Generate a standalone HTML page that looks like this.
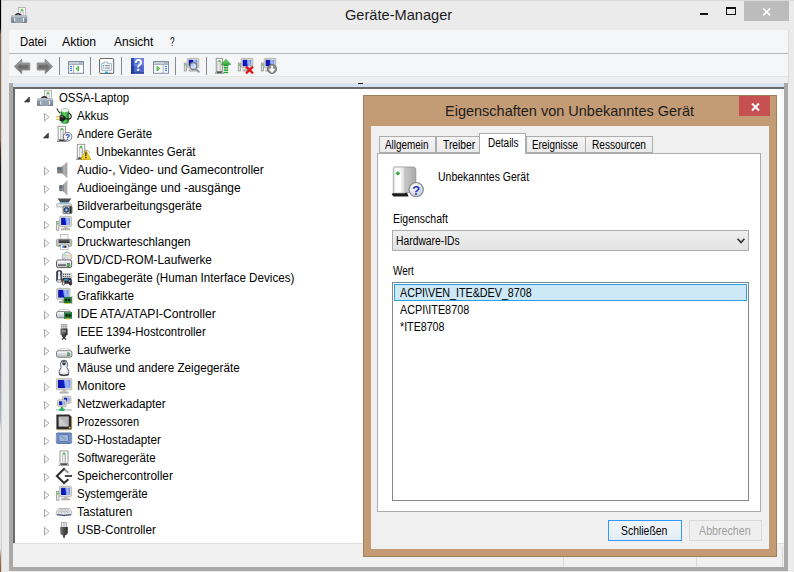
<!DOCTYPE html>
<html><head><meta charset="utf-8">
<style>
*{box-sizing:border-box;margin:0;padding:0}
html,body{width:794px;height:572px;overflow:hidden;background:#ebebeb;font-family:"Liberation Sans",sans-serif;}
.a{position:absolute}
.t{position:absolute;white-space:nowrap;line-height:1;transform-origin:0 0}
svg{position:absolute;overflow:visible}
</style></head><body>
<svg width="0" height="0" style="left:0;top:0"><defs>
<linearGradient id="gTool" x1="0" y1="0" x2="0" y2="1"><stop offset="0" stop-color="#b4bfca"/><stop offset=".3" stop-color="#8f9ba8"/><stop offset="1" stop-color="#76808c"/></linearGradient>
<linearGradient id="gDev" x1="0" y1="0" x2="1" y2="0"><stop offset="0" stop-color="#ffffff"/><stop offset="1" stop-color="#c9c9c9"/></linearGradient>
<linearGradient id="gSpk" x1="0" y1="0" x2="1" y2="0"><stop offset="0" stop-color="#6d6d6d"/><stop offset=".5" stop-color="#b9b9b9"/><stop offset="1" stop-color="#8c8c8c"/></linearGradient>
<linearGradient id="gScr" x1="0" y1=".1" x2="1" y2="0"><stop offset="0" stop-color="#0a14ac"/><stop offset=".44" stop-color="#0f1fca"/><stop offset=".52" stop-color="#7f9cf4"/><stop offset=".7" stop-color="#a4bbfa"/><stop offset="1" stop-color="#5a7fe6"/></linearGradient>
<linearGradient id="gDrv" x1="0" y1="0" x2="0" y2="1"><stop offset="0" stop-color="#eef0f5"/><stop offset="1" stop-color="#bfc3cd"/></linearGradient>
<linearGradient id="gBat" x1="0" y1="0" x2="1" y2="0"><stop offset="0" stop-color="#1f8f2a"/><stop offset=".45" stop-color="#5fd267"/><stop offset="1" stop-color="#1c7c26"/></linearGradient>
<linearGradient id="gUsb" x1="0" y1="0" x2="1" y2="0"><stop offset="0" stop-color="#7a7a7a"/><stop offset=".5" stop-color="#4a4a4a"/><stop offset="1" stop-color="#2e2e2e"/></linearGradient>
<linearGradient id="gHelp" x1="0" y1="0" x2="1" y2="0"><stop offset="0" stop-color="#1c2fa8"/><stop offset=".6" stop-color="#3a55d0"/><stop offset="1" stop-color="#2236b0"/></linearGradient>
<linearGradient id="gArr" x1="0" y1="0" x2="0" y2="1"><stop offset="0" stop-color="#a9a9a9"/><stop offset="1" stop-color="#6f6f6f"/></linearGradient>
<linearGradient id="gGrn" x1="0" y1="0" x2="0" y2="1"><stop offset="0" stop-color="#7fe07a"/><stop offset="1" stop-color="#1f9a2a"/></linearGradient>
</defs></svg>

<div class="a" style="left:0;top:0;width:1px;height:572px;background:linear-gradient(#000 0,#000 28px,#8a6346 34px,#94694a 140px,#5a2a20 150px,#161616 170px,#161616 290px,#6d7480 340px,#a9b6c9 420px,#dde6f1 430px,#dfe8f2 548px,#a87a50 558px,#8a5a38 572px)"></div>
<div class="a" style="left:1px;top:0;width:1px;height:572px;background:#d2d2d2"></div>
<div class="a" style="left:2px;top:0;width:792px;height:1px;background:#dadada"></div>
<svg style="left:11px;top:7px" width="16" height="16" viewBox="0 0 16 16" ><rect x="7.5" y=".4" width="7" height="8" fill="#fdfdfd" stroke="#a9a9a9" stroke-width=".8"/><rect x="9.7" y="3.2" width="2.8" height="5.4" fill="#e6e6e6" stroke="#b5b5b5" stroke-width=".6"/><circle cx="11" cy="3" r="1.2" fill="#4ccf3a"/><path d="M4.2 8.6 Q7.2 5 10.2 8.6" fill="none" stroke="#262626" stroke-width="1.5"/><rect x="0" y="8.2" width="16.2" height="7.8" rx=".9" fill="url(#gTool)"/><rect x=".3" y="9.4" width="15.6" height=".9" fill="#cfd8e2" opacity=".8"/><rect x="3.2" y="11" width="1.2" height="3.8" fill="#eef2f6"/><rect x="11.9" y="11" width="1.2" height="3.8" fill="#eef2f6"/><rect x="4.6" y="11.2" width="7.2" height="4.8" fill="#a9b4c0" opacity=".6"/></svg>
<div class="t" style="left:344.5px;top:7px;font-size:15px;color:#1c1c1c;transform:scaleX(0.9740);">Geräte-Manager</div>
<div class="a" style="left:700px;top:13px;width:8px;height:2px;background:#111"></div>
<div class="a" style="left:726px;top:7px;width:10px;height:8px;border:1px solid #111;border-top-width:2px"></div>
<div class="a" style="left:744px;top:1px;width:45px;height:20px;background:#bcbcbc"></div>
<svg style="left:762.4px;top:7.6px" width="9.4" height="7.8" viewBox="0 0 9 8"><path d="M1 .5 L8 7.5 M8 .5 L1 7.5" stroke="#fff" stroke-width="1.7" fill="none"/></svg>
<div class="a" style="left:9px;top:30px;width:779px;height:54px;background:#f5f6f7"></div>
<div class="a" style="left:9px;top:53px;width:779px;height:1px;background:#b4b6b9"></div>
<div class="a" style="left:9px;top:76px;width:779px;height:8px;background:#eeeeee;border-top:1px solid #e4e5e6"></div>
<div class="a" style="left:788px;top:30px;width:1px;height:54px;background:#dcdcdc"></div>
<div class="t" style="left:19.6px;top:36px;font-size:12px;color:#000;transform:scaleX(0.9423);">Datei</div>
<div class="t" style="left:62.4px;top:36px;font-size:12px;color:#000;transform:scaleX(1.0192);">Aktion</div>
<div class="t" style="left:113.5px;top:36px;font-size:12px;color:#000;transform:scaleX(0.9985);">Ansicht</div>
<div class="t" style="left:169.7px;top:36px;font-size:12px;color:#000;transform:scaleX(0.6729);">?</div>
<svg style="left:14px;top:58.7px" width="16" height="15" viewBox="0 0 16 15" ><g><path d="M.3 7.5 L7.8 .2 L7.8 4 L15.8 4 L15.8 11 L7.8 11 L7.8 14.8 Z" fill="url(#gArr)" stroke="#8f8f8f" stroke-width="1" stroke-linejoin="round"/><path d="M3.4 7.5 L6.8 4.2 V5.8 H14.4 V9.4 H6.8 V10.8 Z" fill="#585858" opacity=".6"/></g></svg>
<svg style="left:37px;top:58.7px" width="16" height="15" viewBox="0 0 16 15" ><g transform="translate(16,0) scale(-1,1)"><path d="M.3 7.5 L7.8 .2 L7.8 4 L15.8 4 L15.8 11 L7.8 11 L7.8 14.8 Z" fill="url(#gArr)" stroke="#8f8f8f" stroke-width="1" stroke-linejoin="round"/><path d="M3.4 7.5 L6.8 4.2 V5.8 H14.4 V9.4 H6.8 V10.8 Z" fill="#585858" opacity=".6"/></g></svg>
<div class="a" style="left:59px;top:57px;width:1px;height:18px;background:#8a8a8a"></div>
<div class="a" style="left:90px;top:57px;width:1px;height:18px;background:#8a8a8a"></div>
<div class="a" style="left:121px;top:57px;width:1px;height:18px;background:#8a8a8a"></div>
<div class="a" style="left:175px;top:57px;width:1px;height:18px;background:#8a8a8a"></div>
<div class="a" style="left:206px;top:57px;width:1px;height:18px;background:#8a8a8a"></div>
<svg style="left:68px;top:61px" width="16" height="13" viewBox="0 0 16 13" ><rect x=".5" y=".5" width="15" height="11.8" fill="#fdfdfd" stroke="#7f8ea3" stroke-width="1"/><rect x="1" y="1" width="14" height="2.2" fill="#c9d1dc"/><path d="M1 3.4 H15" stroke="#8b98ab" stroke-width=".8"/><rect x="11.4" y="1.4" width="1" height="1" fill="#6d7b90"/><rect x="13.2" y="1.4" width="1" height="1" fill="#6d7b90"/><path d="M5.4 3.4 V12" stroke="#8b98ab" stroke-width=".8"/><rect x="2" y="5" width="2" height="1.1" fill="#2b7ae0"/><rect x="2" y="7" width="2" height="1.1" fill="#2b7ae0"/><rect x="2" y="9" width="2" height="1.1" fill="#2b7ae0"/><path d="M10.6 5.3 V9.9 L7.9 7.6 Z" fill="#9be08a" stroke="#2faa2f" stroke-width=".9" stroke-linejoin="round"/></svg>
<svg style="left:99px;top:58px" width="16" height="16" viewBox="0 0 16 16" ><rect x=".5" y=".5" width="14.2" height="15" rx="1.4" fill="#fbfbfb" stroke="#6a6a6a" stroke-width="1"/><path d="M2.6 5.4 V12.4 H12.6 V5.4 H8.6 V4 H5 V5.4 Z" fill="#f2f5f9" stroke="#9aa7b8" stroke-width=".8"/><path d="M6 7.6 H11 M6 10 H11" stroke="#8a8a8a" stroke-width="1"/><rect x="3.8" y="7" width="1.3" height="1.3" fill="#22b3ee"/><rect x="3.8" y="9.5" width="1.3" height="1.1" fill="#9ab"/><rect x="5.8" y="13.6" width="3.4" height="1.4" fill="#22b3ee"/><rect x="10" y="13.8" width="2.6" height="1" fill="#c5c5c5"/></svg>
<svg style="left:131px;top:58px" width="13" height="16" viewBox="0 0 13 16" ><rect x="0" y="0" width="13" height="15.6" fill="#5068d0"/><rect x="0" y="0" width="13" height="8" fill="#6e84e0"/><rect x="0" y="0" width="3" height="15.6" fill="#283c9c"/><rect x="0" y="0" width="3" height="8" fill="#3048b8"/><rect x="0" y="14.4" width="13" height="1.2" fill="#22358e"/><text x="7.8" y="13.6" font-size="16" font-weight="bold" text-anchor="middle" fill="#1a2a7a" font-family="Liberation Sans" opacity=".45" transform="translate(1.2,0) scale(.85,1)">?</text><text x="7.4" y="13.2" font-size="16" font-weight="bold" text-anchor="middle" fill="#fff" font-family="Liberation Sans" transform="translate(1.2,0) scale(.85,1)">?</text></svg>
<svg style="left:153px;top:61px" width="16" height="13" viewBox="0 0 16 13" ><rect x=".5" y=".5" width="15" height="11.8" fill="#fdfdfd" stroke="#7f8ea3" stroke-width="1"/><rect x="1" y="1" width="14" height="2.2" fill="#c9d1dc"/><path d="M1 3.4 H15" stroke="#8b98ab" stroke-width=".8"/><rect x="11.4" y="1.4" width="1" height="1" fill="#6d7b90"/><rect x="13.2" y="1.4" width="1" height="1" fill="#6d7b90"/><path d="M10.2 3.4 V12" stroke="#8b98ab" stroke-width=".8"/><rect x="12" y="5" width="2" height="1.1" fill="#2b7ae0"/><rect x="12" y="7" width="2" height="1.1" fill="#2b7ae0"/><rect x="12" y="9" width="2" height="1.1" fill="#2b7ae0"/><path d="M4 5.3 V9.9 L6.7 7.6 Z" fill="#9be08a" stroke="#2faa2f" stroke-width=".9" stroke-linejoin="round"/></svg>
<svg style="left:184px;top:58px" width="16" height="16" viewBox="0 0 16 16" ><rect x=".2" y="5" width="2.4" height="8" fill="#dcdcdc" stroke="#7f7f7f" stroke-width=".6"/><circle cx="1.4" cy="7" r=".8" fill="#3ec63e"/><rect x="3.2" y="0.3" width="11.6" height="9.6" rx=".9" fill="#dddbd2" stroke="#a9a79e" stroke-width=".7"/><rect x="4.7" y="1.8" width="8.6" height="6.3999999999999995" fill="url(#gScr)"/><rect x="7.2" y="9.9" width="3.6" height="1.8" fill="#bdbcb6"/><rect x="4.4" y="11.5" width="9.2" height="2" rx=".9" fill="#b1b0aa"/><circle cx="9.4" cy="8" r="3.4" fill="#cfe6fb" fill-opacity=".85" stroke="#6e7780" stroke-width="1.1"/><path d="M12 10.8 L15.4 14.4" stroke="#8d949c" stroke-width="1.8"/></svg>
<svg style="left:215px;top:58px" width="16" height="16" viewBox="0 0 16 16" ><rect x="1.2" y="0.4" width="6.4" height="13.2" fill="#fdfdfd" stroke="#8f8f8f" stroke-width=".9"/><rect x="2.8000000000000003" y="3.1999999999999997" width="3.2" height="10.399999999999999" fill="url(#gDev)" stroke="#a5a5a5" stroke-width=".6"/><circle cx="4.4" cy="3.1" r="1.15" fill="#3ec63e"/><rect x="2.2" y="13.6" width="4.4" height="1.2" fill="#2e2e2e"/><rect x="0.0" y="14.6" width="8.8" height=".9" fill="#4a4a4a"/><path d="M11 1.2 L15.8 6.4 H13.2 V8 H8.8 V6.4 H6.2 Z" fill="url(#gGrn)" stroke="#157a20" stroke-width=".5"/><rect x="8.8" y="9" width="4.4" height="1.6" fill="#2aa836"/><rect x="8.8" y="11.4" width="4.4" height="1.6" fill="#2aa836"/><rect x="8.8" y="13.8" width="4.4" height="1.4" fill="#2aa836"/></svg>
<svg style="left:238px;top:58px" width="16" height="16" viewBox="0 0 16 16" ><rect x=".2" y="5" width="2.4" height="8" fill="#dcdcdc" stroke="#7f7f7f" stroke-width=".6"/><circle cx="1.4" cy="7" r=".8" fill="#3ec63e"/><rect x="3.2" y="0.3" width="11.6" height="9.6" rx=".9" fill="#dddbd2" stroke="#a9a79e" stroke-width=".7"/><rect x="4.7" y="1.8" width="8.6" height="6.3999999999999995" fill="url(#gScr)"/><rect x="7.2" y="9.9" width="3.6" height="1.8" fill="#bdbcb6"/><rect x="4.4" y="11.5" width="9.2" height="2" rx=".9" fill="#b1b0aa"/><path d="M8 8.6 L15 15.4 M15 8.6 L8 15.4" stroke="#e0141e" stroke-width="2.2"/></svg>
<svg style="left:261px;top:58px" width="16" height="16" viewBox="0 0 16 16" ><rect x=".2" y="5" width="2.4" height="8" fill="#dcdcdc" stroke="#7f7f7f" stroke-width=".6"/><circle cx="1.4" cy="7" r=".8" fill="#3ec63e"/><rect x="3.2" y="0.3" width="11.6" height="9.6" rx=".9" fill="#dddbd2" stroke="#a9a79e" stroke-width=".7"/><rect x="4.7" y="1.8" width="8.6" height="6.3999999999999995" fill="url(#gScr)"/><rect x="7.2" y="9.9" width="3.6" height="1.8" fill="#bdbcb6"/><rect x="4.4" y="11.5" width="9.2" height="2" rx=".9" fill="#b1b0aa"/><circle cx="11" cy="11" r="4.6" fill="#8c8c8c" stroke="#5d5d5d" stroke-width=".7"/><path d="M11 7.8 V12 M8.6 10.8 L11 13.6 L13.4 10.8" stroke="#fff" stroke-width="1.7" fill="none"/></svg>
<div class="a" style="left:9px;top:83px;width:779px;height:488px;background:#a9a9a9"></div>
<div class="a" style="left:13px;top:83px;width:771px;height:5px;background:linear-gradient(#d9e5f3,#d0deee)"></div>
<div class="a" style="left:13px;top:87px;width:771px;height:457px;background:#6a6a6a"></div>
<div class="a" style="left:15px;top:88.8px;width:769px;height:454.2px;background:#fff"></div>
<div class="a" style="left:358px;top:82.7px;width:5px;height:1.3px;background:#222"></div>
<div class="a" style="left:782px;top:89px;width:1px;height:454px;background:#eef1f5"></div>
<div class="a" style="left:13px;top:543px;width:771px;height:24px;background:#f0f0f0;border-top:1px solid #dedede"></div>
<div class="a" style="left:563px;top:546px;width:1px;height:21px;background:#d9d9d9"></div>
<div class="a" style="left:696px;top:546px;width:1px;height:21px;background:#d9d9d9"></div>
<div class="a" style="left:782px;top:546px;width:1px;height:21px;background:#d9d9d9"></div>
<svg style="left:37px;top:90px" width="16" height="16" viewBox="0 0 16 16" ><rect x="7.5" y=".4" width="7" height="8" fill="#fdfdfd" stroke="#a9a9a9" stroke-width=".8"/><rect x="9.7" y="3.2" width="2.8" height="5.4" fill="#e6e6e6" stroke="#b5b5b5" stroke-width=".6"/><circle cx="11" cy="3" r="1.2" fill="#4ccf3a"/><path d="M4.2 8.6 Q7.2 5 10.2 8.6" fill="none" stroke="#262626" stroke-width="1.5"/><rect x="0" y="8.2" width="16.2" height="7.8" rx=".9" fill="url(#gTool)"/><rect x=".3" y="9.4" width="15.6" height=".9" fill="#cfd8e2" opacity=".8"/><rect x="3.2" y="11" width="1.2" height="3.8" fill="#eef2f6"/><rect x="11.9" y="11" width="1.2" height="3.8" fill="#eef2f6"/><rect x="4.6" y="11.2" width="7.2" height="4.8" fill="#a9b4c0" opacity=".6"/></svg>
<div class="t" style="left:58.5px;top:92px;font-size:12px;color:#000;transform:scaleX(0.9467);">OSSA-Laptop</div>
<svg style="left:24.4px;top:97px" width="6" height="6" viewBox="0 0 6 6" ><path d="M5.4 0 V5 H.4 Z" fill="#404040" stroke="#262626" stroke-width=".6"/></svg>
<svg style="left:56px;top:108px" width="16" height="16" viewBox="0 0 16 16" ><rect x="4.9" y="1" width="8" height="14.4" rx="3" fill="url(#gBat)" stroke="#15621d" stroke-width=".5"/><ellipse cx="8.9" cy="2.4" rx="3.8" ry="1.9" fill="#f2faf2" stroke="#7fb583" stroke-width=".5"/><path d="M.9 .4 Q2 3.4 4 5 M12.8 5 Q16.4 7.4 14.8 10 Q13 11.8 9.6 10.6" fill="none" stroke="#222" stroke-width="1.1"/><rect x="0" y="8.2" width="3.8" height="1.1" fill="#e2b92a"/><rect x="0" y="10.7" width="3.8" height="1.1" fill="#e2b92a"/><path d="M3.6 7.4 L7 7.2 Q9.6 8 10 10.2 Q9.6 12.4 7 13.2 L3.6 13 Z" fill="#1e1e1e"/><path d="M4.6 8.2 L6.6 8 Q7.6 8.6 7.8 9.4 L4.6 9.6 Z" fill="#8a8a8a" opacity=".7"/></svg>
<div class="t" style="left:77.2px;top:110px;font-size:12px;color:#000;transform:scaleX(0.9698);">Akkus</div>
<svg style="left:43.6px;top:113.3px" width="6" height="9" viewBox="0 0 6 9" ><path d="M.5 .4 L4.9 4.2 L.5 8 Z" fill="#fff" stroke="#9c9c9c" stroke-width=".9"/></svg>
<svg style="left:56px;top:126px" width="16" height="16" viewBox="0 0 16 16" ><rect x="2.1" y="0.3" width="7.5" height="13.4" fill="#fdfdfd" stroke="#8f8f8f" stroke-width=".9"/><rect x="4.25" y="3.0999999999999996" width="3.2" height="10.600000000000001" fill="url(#gDev)" stroke="#a5a5a5" stroke-width=".6"/><circle cx="5.85" cy="3.0" r="1.15" fill="#3ec63e"/><rect x="3.1" y="13.700000000000001" width="5.5" height="1.2" fill="#2e2e2e"/><rect x="0.9000000000000001" y="14.700000000000001" width="9.9" height=".9" fill="#4a4a4a"/><circle cx="11.6" cy="10.7" r="4.3" fill="#fbfbfd" stroke="#5f6470" stroke-width=".9"/><text x="11.6" y="13.7" font-size="8.2" font-weight="bold" text-anchor="middle" fill="#2438c4" font-family="Liberation Sans">?</text></svg>
<div class="t" style="left:77.2px;top:128px;font-size:12px;color:#000;transform:scaleX(0.9528);">Andere Geräte</div>
<svg style="left:43.4px;top:133px" width="6" height="6" viewBox="0 0 6 6" ><path d="M5.4 0 V5 H.4 Z" fill="#404040" stroke="#262626" stroke-width=".6"/></svg>
<svg style="left:75px;top:144px" width="16" height="16" viewBox="0 0 16 16" ><rect x="2.3" y="0.3" width="7.5" height="13.4" fill="#fdfdfd" stroke="#8f8f8f" stroke-width=".9"/><rect x="4.449999999999999" y="3.0999999999999996" width="3.2" height="10.600000000000001" fill="url(#gDev)" stroke="#a5a5a5" stroke-width=".6"/><circle cx="6.05" cy="3.0" r="1.15" fill="#3ec63e"/><rect x="3.3" y="13.700000000000001" width="5.5" height="1.2" fill="#2e2e2e"/><rect x="1.0999999999999999" y="14.700000000000001" width="9.9" height=".9" fill="#4a4a4a"/><path d="M6.6 9 Q10.9 3 15.2 9" fill="none" stroke="#9a9a9a" stroke-width=".8"/><path d="M10.9 6.2 L15.9 15.4 L5.9 15.4 Z" fill="#f7d21e" stroke="#c9a50c" stroke-width=".8" stroke-linejoin="round"/><path d="M10.2 8.6 H11.6 L11.3 12.4 H10.5 Z" fill="#111"/><rect x="10.3" y="13" width="1.2" height="1.3" fill="#111"/></svg>
<div class="t" style="left:96.2px;top:146px;font-size:12px;color:#000;transform:scaleX(0.9562);">Unbekanntes Gerät</div>
<svg style="left:56px;top:162px" width="16" height="16" viewBox="0 0 16 16" ><path d="M11.2 0 L11.2 16 L5 10.8 L5 5.2 Z" fill="url(#gSpk)"/><rect x="1.2" y="4.8" width="3.8" height="6.6" fill="#7c7c7c"/><rect x="1.2" y="6" width="3.8" height="2" fill="#5a6f8c"/><path d="M11.2 0 L11.2 16" stroke="#d8d8d8" stroke-width=".8"/></svg>
<div class="t" style="left:77.2px;top:164px;font-size:12px;color:#000;transform:scaleX(1.0128);">Audio-, Video- und Gamecontroller</div>
<svg style="left:43.6px;top:167.3px" width="6" height="9" viewBox="0 0 6 9" ><path d="M.5 .4 L4.9 4.2 L.5 8 Z" fill="#fff" stroke="#9c9c9c" stroke-width=".9"/></svg>
<svg style="left:56px;top:180px" width="16" height="16" viewBox="0 0 16 16" ><path d="M11.2 0.5 L11.2 15.5 L6.6 10.8 L6.6 5.2 Z" fill="url(#gSpk)"/><rect x="3.2" y="5" width="3.4" height="6.2" fill="#7c7c7c"/><rect x="3.2" y="6.2" width="3.4" height="1.8" fill="#5a6f8c"/><path d="M11.2 0.5 L11.2 15.5" stroke="#d8d8d8" stroke-width=".8"/></svg>
<div class="t" style="left:77.2px;top:182px;font-size:12px;color:#000;transform:scaleX(1.0013);">Audioeingänge und -ausgänge</div>
<svg style="left:43.6px;top:185.3px" width="6" height="9" viewBox="0 0 6 9" ><path d="M.5 .4 L4.9 4.2 L.5 8 Z" fill="#fff" stroke="#9c9c9c" stroke-width=".9"/></svg>
<svg style="left:56px;top:198px" width="16" height="16" viewBox="0 0 16 16" ><path d="M1.5 0.6 L15.5 0.6 L12.5 4.6 L4.5 4.6 Z" fill="#4a4f55"/><rect x="3.4" y="4.4" width="10" height="1.2" fill="#3fb4e8"/><rect x=".4" y="5.8" width="15" height="3.2" rx=".6" fill="#e9e9e9" stroke="#9a9a9a" stroke-width=".6"/><rect x="7" y="8" width="9" height="7.6" rx="1" fill="#c9ced4" stroke="#555" stroke-width=".8"/><rect x="13.4" y="8.4" width="2.2" height="6.8" fill="#2d2d2d"/><circle cx="10.4" cy="11.9" r="2.4" fill="#3a6fb5" stroke="#1d2b3e" stroke-width=".9"/><circle cx="10.4" cy="11.9" r=".9" fill="#cfe2f7"/></svg>
<div class="t" style="left:77.2px;top:200px;font-size:12px;color:#000;transform:scaleX(0.9838);">Bildverarbeitungsgeräte</div>
<svg style="left:43.6px;top:203.3px" width="6" height="9" viewBox="0 0 6 9" ><path d="M.5 .4 L4.9 4.2 L.5 8 Z" fill="#fff" stroke="#9c9c9c" stroke-width=".9"/></svg>
<svg style="left:56px;top:216px" width="16" height="16" viewBox="0 0 16 16" ><rect x=".4" y="5.6" width="2.6" height="8.6" fill="#e6e6e6" stroke="#8c8c8c" stroke-width=".7"/><circle cx="1.7" cy="7.6" r=".9" fill="#3ec63e"/><rect x="3.6" y="0.3" width="11.8" height="10.4" rx=".9" fill="#dddbd2" stroke="#a9a79e" stroke-width=".7"/><rect x="5.1" y="1.8" width="8.8" height="7.2" fill="url(#gScr)"/><rect x="7.7" y="10.700000000000001" width="3.6" height="1.8" fill="#bdbcb6"/><rect x="4.9" y="12.3" width="9.2" height="2" rx=".9" fill="#b1b0aa"/></svg>
<div class="t" style="left:77.2px;top:218px;font-size:12px;color:#000;transform:scaleX(1.0192);">Computer</div>
<svg style="left:43.6px;top:221.3px" width="6" height="9" viewBox="0 0 6 9" ><path d="M.5 .4 L4.9 4.2 L.5 8 Z" fill="#fff" stroke="#9c9c9c" stroke-width=".9"/></svg>
<svg style="left:56px;top:234px" width="16" height="16" viewBox="0 0 16 16" ><defs><linearGradient id="gPr" x1="0" y1="0" x2="0" y2="1"><stop offset="0" stop-color="#6a6a6a"/><stop offset="1" stop-color="#2e2e2e"/></linearGradient></defs><rect x="4.3" y=".4" width="7.7" height="5.6" fill="#fdfdfd" stroke="#b0b0b0" stroke-width=".7"/><rect x=".4" y="5.2" width="15.4" height="7.2" rx="1.6" fill="#c4c6c9" stroke="#8a8a8a" stroke-width=".7"/><path d="M2.6 5.4 H13.6 V9 H2.6 Z" fill="url(#gPr)"/><circle cx="14.8" cy="9.3" r=".7" fill="#4be04b"/><path d="M3 11 H5 L4.4 12.6 Z M13 11 H11.2 L12 12.6 Z" fill="#1a1a1a"/><rect x="4.5" y="10.6" width="7.6" height="4.9" fill="#fbfbfb" stroke="#a5a5a5" stroke-width=".6"/><rect x="6.4" y="11.6" width="2" height="2.2" fill="#2a7be0"/><rect x="8.4" y="11.6" width="2" height="2.2" fill="#1d1d1d"/></svg>
<div class="t" style="left:77.2px;top:236px;font-size:12px;color:#000;transform:scaleX(0.9845);">Druckwarteschlangen</div>
<svg style="left:43.6px;top:239.3px" width="6" height="9" viewBox="0 0 6 9" ><path d="M.5 .4 L4.9 4.2 L.5 8 Z" fill="#fff" stroke="#9c9c9c" stroke-width=".9"/></svg>
<svg style="left:56px;top:252px" width="16" height="16" viewBox="0 0 16 16" ><circle cx="11" cy="4.8" r="4.7" fill="#e6e8ef" stroke="#9398a3" stroke-width=".8"/><path d="M11 4.8 L14.4 1.6 A4.7 4.7 0 0 1 15.6 5.6 Z" fill="#f0d9b0"/><path d="M11 4.8 L6.5 3.6 A4.7 4.7 0 0 1 8.6 .8 Z" fill="#b7e3b5"/><path d="M11 4.8 L7.4 7.8 A4.7 4.7 0 0 1 6.4 5.6 Z" fill="#cdbfe8"/><circle cx="11" cy="4.8" r="1.3" fill="#fff" stroke="#aaa" stroke-width=".5"/><rect x=".5" y="8" width="15.2" height="7.6" rx="1.8" fill="url(#gDrv)" stroke="#5c5c5c" stroke-width="1"/><rect x="1.4" y="8.8" width="13.4" height="1.4" rx=".7" fill="#fff" opacity=".85"/><rect x="2" y="12.5" width="8" height="1.2" fill="#3c3c3c"/><rect x="11.6" y="11.2" width="1.9" height="3.6" fill="#36c23a" stroke="#444" stroke-width=".4"/></svg>
<div class="t" style="left:77.2px;top:254px;font-size:12px;color:#000;transform:scaleX(0.9821);">DVD/CD-ROM-Laufwerke</div>
<svg style="left:43.6px;top:257.3px" width="6" height="9" viewBox="0 0 6 9" ><path d="M.5 .4 L4.9 4.2 L.5 8 Z" fill="#fff" stroke="#9c9c9c" stroke-width=".9"/></svg>
<svg style="left:56px;top:270px" width="16" height="16" viewBox="0 0 16 16" ><rect x=".5" y=".5" width="5.4" height="11.6" rx="1.8" fill="#3a3f52" stroke="#23263a" stroke-width=".6"/><path d="M3.2 1.2 Q4.6 1.4 4.4 3 Q4 4 4.2 5 L4.6 9.4 H1.8 L2.2 5 Q2.4 4 2 3 Q1.8 1.4 3.2 1.2 Z" fill="#f4f4f6"/><rect x="1" y="10" width="4.4" height="2" rx=".8" fill="#c9ccd4"/><rect x="6" y="3.4" width="9.8" height="5.2" rx=".8" fill="#eceef1" stroke="#9a9ca3" stroke-width=".6"/><path d="M6.8 4.6 H15 M6.8 6.4 H15" stroke="#3a3a42" stroke-width="1" stroke-dasharray="1.1 .9"/><path d="M7.6 8 Q6.4 8.2 6.2 11 L6.2 14.6 Q7.8 16.4 9 13.6 L12.8 13.6 Q14 16.4 15.8 14.6 L15.6 11 Q15.4 8.2 14.2 8 Z" fill="#2c2e36" stroke="#1a1a20" stroke-width=".5"/><path d="M6.6 12.6 L6.6 14.6 Q7.6 15.6 8.6 13.4 L8.2 12 Z" fill="#e9e9ee"/><rect x="8.8" y="8.6" width="3.6" height="2.2" fill="#2f86e8"/><circle cx="7.6" cy="11.4" r=".8" fill="#f08a24"/><circle cx="8.4" cy="10" r=".7" fill="#36c23a"/><circle cx="13.6" cy="11" r="1" fill="#8c8f98"/></svg>
<div class="t" style="left:77.2px;top:272px;font-size:12px;color:#000;transform:scaleX(0.9700);">Eingabegeräte (Human Interface Devices)</div>
<svg style="left:43.6px;top:275.3px" width="6" height="9" viewBox="0 0 6 9" ><path d="M.5 .4 L4.9 4.2 L.5 8 Z" fill="#fff" stroke="#9c9c9c" stroke-width=".9"/></svg>
<svg style="left:56px;top:288px" width="16" height="16" viewBox="0 0 16 16" ><rect x="0.7" y="0.3" width="13.3" height="11" rx=".9" fill="#dddbd2" stroke="#a9a79e" stroke-width=".7"/><rect x="2.2" y="1.8" width="10.3" height="7.8" fill="url(#gScr)"/><rect x="5.550000000000001" y="11.3" width="3.6" height="1.8" fill="#bdbcb6"/><rect x="2.750000000000001" y="12.9" width="9.2" height="2" rx=".9" fill="#b1b0aa"/><rect x="15.5" y="8" width=".8" height="8" fill="#9a9a9a"/><rect x="8" y="9.2" width="7.4" height="5.8" fill="#1f8a3a" stroke="#0f5a22" stroke-width=".5"/><rect x="9.2" y="10.799999999999999" width="2.1" height="2.4" fill="#111"/><rect x="12.1" y="10.799999999999999" width="2.1" height="2.4" fill="#111"/><rect x="9.2" y="15.0" width="4.4" height="1" fill="#e6c12a"/></svg>
<div class="t" style="left:77.2px;top:290px;font-size:12px;color:#000;transform:scaleX(0.9712);">Grafikkarte</div>
<svg style="left:43.6px;top:293.3px" width="6" height="9" viewBox="0 0 6 9" ><path d="M.5 .4 L4.9 4.2 L.5 8 Z" fill="#fff" stroke="#9c9c9c" stroke-width=".9"/></svg>
<svg style="left:56px;top:306px" width="16" height="16" viewBox="0 0 16 16" ><ellipse cx="8.0" cy="5.4" rx="6.3" ry="2" fill="#fbfbfb" stroke="#a8a8a8" stroke-width=".6"/><rect x="0.5" y="5.6" width="15" height="6.2" rx="1.8" fill="url(#gDrv)" stroke="#6e6e6e" stroke-width=".9"/><rect x="1.5" y="6.199999999999999" width="13" height="1.2" rx=".6" fill="#fff" opacity=".8"/><rect x="8.4" y="6.6" width="7.4" height="5.8" fill="#1f8a3a" stroke="#0f5a22" stroke-width=".5"/><rect x="9.6" y="8.2" width="2.1" height="2.4" fill="#111"/><rect x="12.5" y="8.2" width="2.1" height="2.4" fill="#111"/><rect x="9.6" y="12.399999999999999" width="4.4" height="1" fill="#e6c12a"/></svg>
<div class="t" style="left:77.2px;top:308px;font-size:12px;color:#000;transform:scaleX(1.0170);">IDE ATA/ATAPI-Controller</div>
<svg style="left:43.6px;top:311.3px" width="6" height="9" viewBox="0 0 6 9" ><path d="M.5 .4 L4.9 4.2 L.5 8 Z" fill="#fff" stroke="#9c9c9c" stroke-width=".9"/></svg>
<svg style="left:56px;top:324px" width="16" height="16" viewBox="0 0 16 16" ><rect x="5.2" y=".4" width="5.6" height="4.6" fill="#f2f2f2" stroke="#8a8a8a" stroke-width=".7"/><rect x="6.6" y="1.4" width="1" height="2.2" fill="#666"/><rect x="8.6" y="1.4" width="1" height="2.2" fill="#666"/><rect x="4.4" y="4.6" width="7.2" height="6.6" rx=".8" fill="url(#gUsb)"/><rect x="6" y="6" width="4" height="2.4" fill="#8d8d8d"/><path d="M6 11.2 L10 15.6 M10 11.2 L6 15.6" stroke="#2b2b2b" stroke-width="1.3"/><rect x="6.6" y="11" width="2.8" height="1.6" fill="#3a3a3a"/></svg>
<div class="t" style="left:77.2px;top:326px;font-size:12px;color:#000;transform:scaleX(0.9505);">IEEE 1394-Hostcontroller</div>
<svg style="left:43.6px;top:329.3px" width="6" height="9" viewBox="0 0 6 9" ><path d="M.5 .4 L4.9 4.2 L.5 8 Z" fill="#fff" stroke="#9c9c9c" stroke-width=".9"/></svg>
<svg style="left:56px;top:342px" width="16" height="16" viewBox="0 0 16 16" ><ellipse cx="8.2" cy="8.6" rx="6.5" ry="2" fill="#fbfbfb" stroke="#a8a8a8" stroke-width=".6"/><rect x="0.5" y="8.8" width="15.4" height="6.3999999999999995" rx="1.8" fill="url(#gDrv)" stroke="#6e6e6e" stroke-width=".9"/><rect x="1.5" y="9.399999999999999" width="13.4" height="1.2" rx=".6" fill="#fff" opacity=".8"/><rect x="11.6" y="10.8" width="1.8" height="3" fill="#36c23a" stroke="#555" stroke-width=".4"/></svg>
<div class="t" style="left:77.2px;top:344px;font-size:12px;color:#000;transform:scaleX(0.9698);">Laufwerke</div>
<svg style="left:43.6px;top:347.3px" width="6" height="9" viewBox="0 0 6 9" ><path d="M.5 .4 L4.9 4.2 L.5 8 Z" fill="#fff" stroke="#9c9c9c" stroke-width=".9"/></svg>
<svg style="left:56px;top:360px" width="16" height="16" viewBox="0 0 16 16" ><defs><radialGradient id="gMs" cx=".5" cy=".55" r=".6"><stop offset="0" stop-color="#ffffff"/><stop offset=".7" stop-color="#e6e6ea"/><stop offset="1" stop-color="#8d8f98"/></radialGradient></defs><path d="M5.8 .6 Q8 0 10.2 .6 Q12.6 3.4 11 7.6 Q14.2 12 12.4 15 Q8 16.6 3.6 15 Q1.8 12 5 7.6 Q3.4 3.4 5.8 .6 Z" fill="url(#gMs)" stroke="#55607a" stroke-width=".9"/><path d="M3.4 14.6 Q8 16.4 12.6 14.6 Q8 15.4 3.4 14.6 Z" fill="#333" stroke="#333" stroke-width=".6"/><rect x="6.5" y=".7" width="3" height="4.6" rx="1.3" fill="#26262a"/><rect x="7.4" y="1.3" width="1.3" height="2" rx=".6" fill="#e3e3e3"/></svg>
<div class="t" style="left:77.2px;top:362px;font-size:12px;color:#000;transform:scaleX(0.9716);">Mäuse und andere Zeigegeräte</div>
<svg style="left:43.6px;top:365.3px" width="6" height="9" viewBox="0 0 6 9" ><path d="M.5 .4 L4.9 4.2 L.5 8 Z" fill="#fff" stroke="#9c9c9c" stroke-width=".9"/></svg>
<svg style="left:56px;top:378px" width="16" height="16" viewBox="0 0 16 16" ><rect x="0.4" y="0.4" width="15.4" height="11.4" rx=".9" fill="#dddbd2" stroke="#a9a79e" stroke-width=".7"/><rect x="1.9" y="1.9" width="12.4" height="8.2" fill="url(#gScr)"/><rect x="6.3" y="11.8" width="3.6" height="1.8" fill="#bdbcb6"/><rect x="3.5" y="13.4" width="9.2" height="2" rx=".9" fill="#b1b0aa"/></svg>
<div class="t" style="left:77.2px;top:380px;font-size:12px;color:#000;transform:scaleX(1.0452);">Monitore</div>
<svg style="left:43.6px;top:383.3px" width="6" height="9" viewBox="0 0 6 9" ><path d="M.5 .4 L4.9 4.2 L.5 8 Z" fill="#fff" stroke="#9c9c9c" stroke-width=".9"/></svg>
<svg style="left:56px;top:396px" width="16" height="16" viewBox="0 0 16 16" ><rect x="6.4" y="0.2" width="8.6" height="7" rx=".9" fill="#dddbd2" stroke="#a9a79e" stroke-width=".7"/><rect x="7.9" y="1.7" width="5.6" height="3.8" fill="url(#gScr)"/><rect x="1.6" y="3.8" width="8.6" height="7" rx=".9" fill="#dddbd2" stroke="#a9a79e" stroke-width=".7"/><rect x="3.1" y="5.3" width="5.6" height="3.8" fill="url(#gScr)"/><rect x="5" y="10.8" width="1.8" height="2.6" fill="#15a84a"/><rect x="3.4" y="12.6" width="5" height="2.4" fill="#15a84a"/><rect x=".2" y="13.2" width="15.6" height="1.4" fill="#b9c0c6"/><rect x="3.4" y="13" width="5" height="1.8" fill="#19b552"/></svg>
<div class="t" style="left:77.2px;top:398px;font-size:12px;color:#000;transform:scaleX(0.9777);">Netzwerkadapter</div>
<svg style="left:43.6px;top:401.3px" width="6" height="9" viewBox="0 0 6 9" ><path d="M.5 .4 L4.9 4.2 L.5 8 Z" fill="#fff" stroke="#9c9c9c" stroke-width=".9"/></svg>
<svg style="left:56px;top:414px" width="16" height="16" viewBox="0 0 16 16" ><path d="M.4 .4 H13.2 L15.6 2.8 V15.6 H.4 Z" fill="#2b2b2b"/><path d="M15.8 3.6 V13.6 M1.4 15.9 H11.6" stroke="#e2a52a" stroke-width=".9" stroke-dasharray=".9 .9"/><rect x="2.6" y="2.6" width="10" height="10" fill="#c9c9c9"/><path d="M2.6 2.6 H12.6 V12.6 Z" fill="#a9a9a9" opacity=".6"/><rect x="12.8" y="12.8" width="1.8" height="1.8" fill="#f0a020"/></svg>
<div class="t" style="left:77.2px;top:416px;font-size:12px;color:#000;transform:scaleX(0.9232);">Prozessoren</div>
<svg style="left:43.6px;top:419.3px" width="6" height="9" viewBox="0 0 6 9" ><path d="M.5 .4 L4.9 4.2 L.5 8 Z" fill="#fff" stroke="#9c9c9c" stroke-width=".9"/></svg>
<svg style="left:56px;top:432px" width="16" height="16" viewBox="0 0 16 16" ><rect x=".4" y="1" width="15.2" height="10.4" rx="1" fill="#6f8fc4" stroke="#3f5f98" stroke-width=".8"/><path d="M.2 2.6 V10 M15.8 2.6 V10" stroke="#d6e0f0" stroke-width=".9" stroke-dasharray="1 1"/><rect x="3" y="2.8" width="9.4" height="6.8" fill="#9fb4d6" stroke="#4d6aa0" stroke-width=".6"/><path d="M5 4 L10.4 8.4" stroke="#5f7fb5" stroke-width=".7"/></svg>
<div class="t" style="left:77.2px;top:434px;font-size:12px;color:#000;transform:scaleX(0.9739);">SD-Hostadapter</div>
<svg style="left:43.6px;top:437.3px" width="6" height="9" viewBox="0 0 6 9" ><path d="M.5 .4 L4.9 4.2 L.5 8 Z" fill="#fff" stroke="#9c9c9c" stroke-width=".9"/></svg>
<svg style="left:56px;top:450px" width="16" height="16" viewBox="0 0 16 16" ><rect x="4" y="1" width="8" height="12.6" fill="#fdfdfd" stroke="#8f8f8f" stroke-width=".9"/><rect x="6.4" y="3.8" width="3.2" height="9.8" fill="url(#gDev)" stroke="#a5a5a5" stroke-width=".6"/><circle cx="8.0" cy="3.7" r="1.15" fill="#3ec63e"/><rect x="5" y="13.6" width="6" height="1.2" fill="#2e2e2e"/><rect x="2.8" y="14.6" width="10.4" height=".9" fill="#4a4a4a"/></svg>
<div class="t" style="left:77.2px;top:452px;font-size:12px;color:#000;transform:scaleX(0.9657);">Softwaregeräte</div>
<svg style="left:43.6px;top:455.3px" width="6" height="9" viewBox="0 0 6 9" ><path d="M.5 .4 L4.9 4.2 L.5 8 Z" fill="#fff" stroke="#9c9c9c" stroke-width=".9"/></svg>
<svg style="left:56px;top:468px" width="16" height="16" viewBox="0 0 16 16" ><path d="M12.4 4.8 L8 .9" fill="none" stroke="#9a9a9a" stroke-width="2"/><path d="M8.6 1.4 L8 .9 L.9 8 L8 15.1 L12.4 11.2" fill="none" stroke="#333" stroke-width="2.1" stroke-linejoin="miter"/><rect x="8.8" y="7" width="7.2" height="2" fill="#4a4a4a"/></svg>
<div class="t" style="left:77.2px;top:470px;font-size:12px;color:#000;transform:scaleX(0.9915);">Speichercontroller</div>
<svg style="left:43.6px;top:473.3px" width="6" height="9" viewBox="0 0 6 9" ><path d="M.5 .4 L4.9 4.2 L.5 8 Z" fill="#fff" stroke="#9c9c9c" stroke-width=".9"/></svg>
<svg style="left:56px;top:486px" width="16" height="16" viewBox="0 0 16 16" ><rect x=".4" y="5.6" width="2.6" height="8.6" fill="#e6e6e6" stroke="#8c8c8c" stroke-width=".7"/><circle cx="1.7" cy="7.6" r=".9" fill="#3ec63e"/><rect x="3.6" y="0.3" width="11.8" height="10.4" rx=".9" fill="#dddbd2" stroke="#a9a79e" stroke-width=".7"/><rect x="5.1" y="1.8" width="8.8" height="7.2" fill="url(#gScr)"/><rect x="7.7" y="10.700000000000001" width="3.6" height="1.8" fill="#bdbcb6"/><rect x="4.9" y="12.3" width="9.2" height="2" rx=".9" fill="#b1b0aa"/></svg>
<div class="t" style="left:77.2px;top:488px;font-size:12px;color:#000;transform:scaleX(0.9548);">Systemgeräte</div>
<svg style="left:43.6px;top:491.3px" width="6" height="9" viewBox="0 0 6 9" ><path d="M.5 .4 L4.9 4.2 L.5 8 Z" fill="#fff" stroke="#9c9c9c" stroke-width=".9"/></svg>
<svg style="left:56px;top:504px" width="16" height="16" viewBox="0 0 16 16" ><path d="M3 4.6 H13 Q15.6 6 15.8 9.4 Q15.6 11 14 11 H2 Q.4 11 .2 9.4 Q.4 6 3 4.6 Z" fill="#f3f3f5" stroke="#8e8e98" stroke-width=".7"/><path d="M3.2 6 H12.8 M2.4 7.4 H13.6 M2 8.8 H14" stroke="#8a8a92" stroke-width=".8" stroke-dasharray=".9 .6"/><path d="M1 10.6 Q8 12.4 15 10.6" stroke="#2a3560" stroke-width="1" fill="none"/></svg>
<div class="t" style="left:77.2px;top:506px;font-size:12px;color:#000;transform:scaleX(0.9867);">Tastaturen</div>
<svg style="left:43.6px;top:509.3px" width="6" height="9" viewBox="0 0 6 9" ><path d="M.5 .4 L4.9 4.2 L.5 8 Z" fill="#fff" stroke="#9c9c9c" stroke-width=".9"/></svg>
<svg style="left:56px;top:522px" width="16" height="16" viewBox="0 0 16 16" ><rect x="5.6" y=".4" width="4.8" height="4.8" fill="#ececec" stroke="#8f8f9a" stroke-width=".7"/><rect x="6.8" y="1.4" width="2.4" height="2.4" fill="#c9c9c9"/><path d="M4.2 5 H11.8 V10.6 Q11.6 13 9 13.6 V15.8 H7 V13.6 Q4.4 13 4.2 10.6 Z" fill="url(#gUsb)"/></svg>
<div class="t" style="left:77.2px;top:524px;font-size:12px;color:#000;transform:scaleX(0.9777);">USB-Controller</div>
<svg style="left:43.6px;top:527.3px" width="6" height="9" viewBox="0 0 6 9" ><path d="M.5 .4 L4.9 4.2 L.5 8 Z" fill="#fff" stroke="#9c9c9c" stroke-width=".9"/></svg>
<div class="a" style="left:363px;top:95px;width:414px;height:462px;background:#c39b74;border:1px solid #a17e5c"></div>
<div class="a" style="left:371px;top:125.5px;width:398.4px;height:423.7px;background:#f0f0f0"></div>
<div class="t" style="left:445.2px;top:103px;font-size:15px;color:#1c1c1c;transform:scaleX(0.9663);">Eigenschaften von Unbekanntes Gerät</div>
<div class="a" style="left:739px;top:96px;width:31px;height:20px;background:#c75050"></div>
<svg style="left:750.6px;top:102.5px" width="9" height="8" viewBox="0 0 9 8"><path d="M1 .5 L8 7.5 M8 .5 L1 7.5" stroke="#fff" stroke-width="1.9" fill="none"/></svg>
<div class="a" style="left:377px;top:152.6px;width:384.2px;height:359.4px;background:#fff;border:1px solid #acacac"></div>
<div class="a" style="left:379.3px;top:135.6px;width:56.3px;height:17.8px;background:linear-gradient(#f4f4f4,#eaeaea);border:1px solid #acacac;"></div>
<div class="t" style="left:385.1px;top:139px;font-size:12px;color:#000;transform:scaleX(0.8254);">Allgemein</div>
<div class="a" style="left:436.2px;top:135.6px;width:43.8px;height:17.8px;background:linear-gradient(#f4f4f4,#eaeaea);border:1px solid #acacac;"></div>
<div class="t" style="left:442.5px;top:139px;font-size:12px;color:#000;transform:scaleX(0.8542);">Treiber</div>
<div class="a" style="left:479.3px;top:133px;width:47.1px;height:21px;background:#fff;border:1px solid #acacac;border-bottom:none"></div>
<div class="t" style="left:487.5px;top:137px;font-size:12px;color:#000;transform:scaleX(0.8341);">Details</div>
<div class="a" style="left:526.4px;top:135.6px;width:59.2px;height:17.8px;background:linear-gradient(#f4f4f4,#eaeaea);border:1px solid #acacac;"></div>
<div class="t" style="left:531.7px;top:139px;font-size:12px;color:#000;transform:scaleX(0.8228);">Ereignisse</div>
<div class="a" style="left:584.6px;top:135.6px;width:68.2px;height:17.8px;background:linear-gradient(#f4f4f4,#eaeaea);border:1px solid #acacac;"></div>
<div class="t" style="left:591.8px;top:139px;font-size:12px;color:#000;transform:scaleX(0.8433);">Ressourcen</div>
<svg style="left:391px;top:165px" width="32" height="32" viewBox="0 0 32 32" ><defs><linearGradient id="gBig" x1="0" y1="0" x2="1" y2="0"><stop offset="0" stop-color="#d6d6d6"/><stop offset=".25" stop-color="#ffffff"/><stop offset=".7" stop-color="#f1f1f1"/><stop offset="1" stop-color="#cfcfcf"/></linearGradient><linearGradient id="gBigS" x1="0" y1="0" x2="1" y2="0"><stop offset="0" stop-color="#e9e9e9"/><stop offset="1" stop-color="#a9a9a9"/></linearGradient><radialGradient id="gQ" cx=".35" cy=".3" r=".8"><stop offset="0" stop-color="#ffffff"/><stop offset="1" stop-color="#c9ccd4"/></radialGradient></defs><path d="M.6 29 L3 27.4 H16 L17.6 31.4 H2.4 Z" fill="#1d1d1d"/><path d="M2.4 3.4 Q2.4 2 3.8 2 L22 2 Q24.6 2 24.8 4 V27.6 H2.4 Z" fill="url(#gBigS)" stroke="#8f8f8f" stroke-width=".8"/><path d="M2.4 3.6 Q2.4 2.2 3.8 2.2 L12.6 2.2 Q14 2.4 14 4 V28 H2.4 Z" fill="url(#gBig)" stroke="#b5b5b5" stroke-width=".6"/><path d="M4 9 L7 6 L10 9 L10 27 L4 27 Z" fill="#fff" opacity=".7"/><path d="M6.9 6.6 L9 8.4 L6.9 10.2 L4.8 8.4 Z" fill="#2fae3a" stroke="#1b7a26" stroke-width=".4"/><circle cx="25.2" cy="24.6" r="7.1" fill="url(#gQ)" stroke="#7d8290" stroke-width="1.1"/><text x="25.2" y="29.6" font-size="13.5" font-weight="bold" text-anchor="middle" fill="#2438c4" font-family="Liberation Sans">?</text></svg>
<div class="t" style="left:438.0px;top:171px;font-size:12px;color:#000;transform:scaleX(0.8754);">Unbekanntes Gerät</div>
<div class="t" style="left:392.6px;top:213px;font-size:12px;color:#000;transform:scaleX(0.8753);">Eigenschaft</div>
<div class="a" style="left:391.5px;top:230px;width:357.5px;height:20.6px;background:linear-gradient(#efefef,#e3e3e3);border:1px solid #acacac"></div>
<div class="t" style="left:396.4px;top:235px;font-size:12px;color:#000;transform:scaleX(0.8606);">Hardware-IDs</div>
<svg style="left:736.5px;top:238px" width="8" height="6" viewBox="0 0 8 6"><path d="M.6 .8 L4 4.6 L7.4 .8" stroke="#333" stroke-width="1.7" fill="none"/></svg>
<div class="t" style="left:392.6px;top:265px;font-size:12px;color:#000;transform:scaleX(0.8318);">Wert</div>
<div class="a" style="left:391.5px;top:282px;width:357.5px;height:218.6px;background:#fff;border:1px solid #828790"></div>
<div class="a" style="left:394px;top:284px;width:353px;height:17px;background:#cde8f6;border:1px solid #2f9fe0"></div>
<div class="t" style="left:400.2px;top:287px;font-size:12px;color:#000;transform:scaleX(0.8934);">ACPI\VEN_ITE&amp;DEV_8708</div>
<div class="t" style="left:400.2px;top:304px;font-size:12px;color:#000;transform:scaleX(0.9020);">ACPI\ITE8708</div>
<div class="t" style="left:400.2px;top:321px;font-size:12px;color:#000;transform:scaleX(0.8892);">*ITE8708</div>
<div class="a" style="left:608px;top:520px;width:73.5px;height:21px;background:linear-gradient(#f1f5fa,#e3ecf6);border:1px solid #3399ff"></div>
<div class="t" style="left:621.2px;top:525px;font-size:12px;color:#000;transform:scaleX(0.8693);">Schließen</div>
<div class="a" style="left:689px;top:520px;width:73px;height:20.6px;background:#efefef;border:1px solid #d9d9d9"></div>
<div class="t" style="left:699.0px;top:525px;font-size:12px;color:#9f9f9f;transform:scaleX(0.8907);">Abbrechen</div>
</body></html>
